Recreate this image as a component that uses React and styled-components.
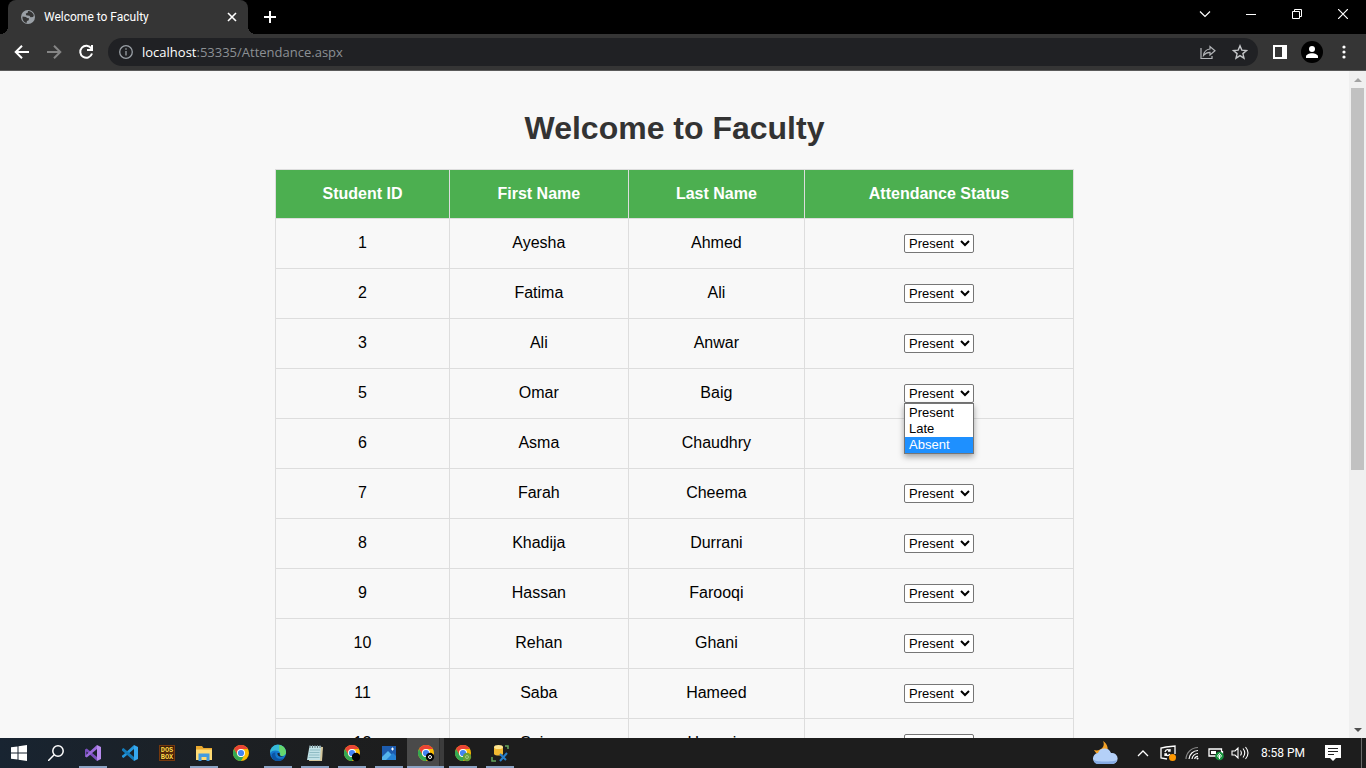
import React from "react";
import styled, { createGlobalStyle } from "styled-components";

const Global = createGlobalStyle`
  * { box-sizing: border-box; }
  body { margin: 0; background: #f8f8f8; font-family: "Liberation Sans", Arial, sans-serif; }
  svg { display: block; }
  button { border: 0; padding: 0; background: none; color: inherit; font: inherit; }
`;

const uiFont = `Roboto, "Open Sans", sans-serif`;

const Window = styled.div`
  display: flex;
  flex-direction: column;
  height: 100vh;
  overflow: hidden;
`;

const TabStrip = styled.header`
  display: flex;
  height: 34px;
  flex: none;
  padding-left: 8px;
  background: #000;
  color: #fff;
`;

const Tab = styled.div`
  display: flex;
  align-items: center;
  width: 240px;
  height: 34px;
  padding: 0 9px 0 12px;
  border-radius: 8px 8px 0 0;
  background: #353535;
  font: 12px/16px ${uiFont};
  position: relative;
  &::before, &::after {
    content: "";
    position: absolute;
    bottom: 0;
    width: 8px;
    height: 8px;
  }
  &::before { left: -8px; background: radial-gradient(circle at 0 0, #000 8px, #353535 8px); }
  &::after { right: -8px; background: radial-gradient(circle at 100% 0, #000 8px, #353535 8px); }
`;

const TabTitle = styled.span`
  flex: 1;
  padding-left: 8px;
  white-space: nowrap;
`;

const IconButton = styled.button`
  display: grid;
  place-items: center;
  flex: none;
  width: ${(p) => p.$w || 32}px;
  height: ${(p) => p.$h || 32}px;
  color: ${(p) => p.$color || "#fff"};
`;

const WindowControls = styled.div`
  display: flex;
  margin-left: auto;
`;

const Toolbar = styled.div`
  display: flex;
  align-items: center;
  flex: none;
  height: 37px;
  padding: 0 6px;
  background: #353535;
  border-bottom: 1px solid #5a5a5a;
`;

const AddressBar = styled.div`
  display: flex;
  align-items: center;
  flex: 1;
  height: 28px;
  margin: 0 6px;
  padding: 0 2px 0 10px;
  border-radius: 14px;
  background: #202124;
  color: #9aa0a6;
`;

const Url = styled.a`
  flex: 1;
  padding-left: 8px;
  color: #8c9094;
  font: 13px/20px "Open Sans", sans-serif;
  text-decoration: none;
  b { color: #fff; font-weight: 400; }
`;

const Viewport = styled.div`
  display: flex;
  flex: 1;
  min-height: 0;
`;

const Page = styled.main`
  flex: 1;
  overflow: hidden;
  padding: 16px 20px 0;
  background: #f8f8f8;
`;

const Heading = styled.h1`
  margin: 22px 0;
  color: #333;
  font-size: 32px;
  line-height: 38px;
  text-align: center;
`;

const Scrollbar = styled.div`
  display: flex;
  flex-direction: column;
  align-items: center;
  width: 17px;
  background: #f0f0f0;
`;

const ScrollArrow = styled.button`
  display: grid;
  place-items: center;
  width: 17px;
  height: 17px;
  color: ${(p) => p.$color};
`;

const Track = styled.div`
  flex: 1;
  width: 13px;
`;

const Thumb = styled.div`
  height: 60.4%;
  background: #c1c1c1;
`;

const Table = styled.table`
  width: 100%;
  max-width: 799px;
  margin: 0 auto;
  border-collapse: collapse;
  table-layout: fixed;
  color: #000;
  font-size: 16px;
  line-height: 18px;
  text-align: center;
`;

const Col = styled.col`
  width: ${(p) => p.$share}%;
`;

const Th = styled.th`
  height: 49px;
  padding: 0 15px;
  border: 1px solid #ddd;
  background: #4caf50;
  color: #fff;
`;

const Td = styled.td`
  height: 50px;
  padding: 0 15px 2px;
  border: 1px solid #ddd;
`;

const StatusCell = styled(Td)`
  padding: 0 15px;
`;

const Picker = styled.div`
  position: relative;
  width: 70px;
  margin: 0 auto;
`;

const Select = styled.select`
  display: block;
  width: 70px;
  height: 19px;
  padding: 0;
  border: 1px solid #767676;
  border-radius: 2px;
  background-color: #fff;
  color: #000;
  font: 13px "Liberation Sans", Arial, sans-serif;
`;

const Menu = styled.ul`
  position: absolute;
  z-index: 1;
  top: 100%;
  left: 0;
  width: 100%;
  margin: 0;
  padding: 1px 0 0;
  border: 1px solid #767676;
  background: #fff;
  box-shadow: 0 3px 6px rgba(0, 0, 0, 0.35);
  list-style: none;
`;

const MenuItem = styled.li`
  padding-left: 4px;
  background: ${(p) => (p.$active ? "#1e90ff" : "#fff")};
  color: ${(p) => (p.$active ? "#fff" : "#000")};
  font-size: 13px;
  line-height: 16px;
  text-align: left;
`;

const Taskbar = styled.footer`
  display: flex;
  flex: none;
  height: 30px;
  background: linear-gradient(90deg, #182431, #1c2024 16%, #1d1d1d 30%);
  color: #fff;
`;

const TaskButton = styled.button`
  display: grid;
  place-items: center;
  width: 37px;
  height: 30px;
  flex: none;
  background: ${(p) => (p.$active ? "linear-gradient(90deg, #4a4a4a 32px, #222 32px, #3c3c3c 33px)" : "none")};
  position: relative;
  &::after {
    content: "";
    position: absolute;
    bottom: 0;
    left: ${(p) => (p.$active ? 0 : 5)}px;
    right: ${(p) => (p.$active ? 0 : 4)}px;
    height: 2px;
    background: ${(p) => (p.$running ? "#8ba3c4" : "transparent")};
  }
`;

const Tray = styled.div`
  display: flex;
  align-items: center;
  margin-left: auto;
`;

const Clock = styled.time`
  width: 60px;
  font: 12px/16px ${uiFont};
  text-align: center;
  white-space: nowrap;
`;

const ShowDesktop = styled.button`
  width: 5px;
  height: 30px;
  margin-left: 8px;
  border-left: 1px solid #6a6a6a;
`;

const Line = ({ size = 16, d, w = 2, children }) => (
  <svg width={size} height={size} viewBox={`0 0 ${size} ${size}`} fill="none" stroke="currentColor" strokeWidth={w}>
    {d && <path d={d} />}
    {children}
  </svg>
);

const Globe = () => (
  <svg width="16" height="16" viewBox="0 0 16 16">
    <circle cx="8" cy="8" r="7" fill="#9aa0a6" />
    <path d="M2.500 7.500 6 8l1 1 2 .3-.3 2-1.700.8-.500 2C4.300 13.500 2 11 2.500 7.500ZM8 2l-.3 1.800-1.900.8.300 1.600 3.400.500 1 1.600 2.600-.300.700-1.500C13.500 4 10.500 2 8 2Z" fill="#353535" />
  </svg>
);

const Chrome = ({ badge, mark }) => (
  <svg width="18" height="18" viewBox="0 0 18 18">
    <circle cx="9" cy="9" r="8" fill="#fbbc04" />
    <path d="M2.070 5A8 8 0 0 1 15.930 5H9A4 4 0 0 0 5.500 11Z" fill="#ea4335" />
    <path d="M2.070 5A8 8 0 0 0 9 17l3.500-6A4 4 0 0 1 5.500 11Z" fill="#34a853" />
    <circle cx="9" cy="9" r="4" fill="#fff" />
    <circle cx="9" cy="9" r="3.100" fill="#4285f4" />
    {badge && <circle cx="13" cy="13" r="4.200" fill={badge} />}
    {mark && <circle cx="13" cy="13" r="1.500" fill="none" stroke={mark} />}
  </svg>
);

const Windows = () => (
  <svg width="16" height="16" viewBox="0 0 16 16" fill="#fff">
    <path d="M0 2.300 6.500 1.400V7.500H0ZM7.500 1.200 16 0V7.500H7.500ZM0 8.500H6.500V14.600L0 13.700ZM7.500 8.500H16V16L7.500 14.800Z" />
  </svg>
);

const VisualStudio = () => (
  <svg width="18" height="18" viewBox="0 0 18 18">
    <path d="M1 5.500 2.800 4.500 13 13V17L2.500 7.500v4L1 12.500Z" fill="#7b4fc0" />
    <path d="M1 12.500 2.800 13.500 13 5V1L2.500 10.500Z" fill="#9a6bdb" />
    <path d="M13 1 17 3v12l-4 2Z" fill="#b78bee" />
  </svg>
);

const Code = () => (
  <svg width="18" height="18" viewBox="0 0 18 18">
    <path d="M13 1 2 11l-1 .500v1.500l1.500 1L13 5Z" fill="#2396db" />
    <path d="M13 17 1 6.500V5l1.500-1L13 13Z" fill="#147bb9" />
    <path d="m13 1 4 2v12l-4 2Z" fill="#36a8ef" />
  </svg>
);

const DosBox = () => (
  <svg width="16" height="16" viewBox="0 0 16 16">
    <rect width="16" height="16" fill="#75380d" />
    <path d="M1 1h14v6.500H1ZM1 8.500h14V15H1Z" fill="#3a1c08" />
    <g fill="#ffd84a" fontFamily="Liberation Mono, monospace" fontSize="7" fontWeight="700" textAnchor="middle">
      <text x="8" y="7">DOS</text>
      <text x="8" y="14">BOX</text>
    </g>
  </svg>
);

const Explorer = () => (
  <svg width="18" height="18" viewBox="0 0 18 18">
    <path d="M1 2h6l1.500 2H17v12H1Z" fill="#e9a82e" />
    <path d="M1 5.500h16V16H1Z" fill="#ffdb74" />
    <path d="M3.500 9.500h11V17h-3v-4h-5v4h-3Z" fill="#439be0" />
  </svg>
);

const Edge = () => (
  <svg width="18" height="18" viewBox="0 0 18 18">
    <circle cx="9" cy="9" r="8" fill="#1479cf" />
    <path d="M1 9A8 8 0 0 1 17 8c.4 4-5 5-6 3.500C10 10 12 9 10 7.500 7.500 5.800 3 6 1 9Z" fill="#36b9d8" />
    <path d="M10 1.100A8 8 0 0 1 17 8c.2 3-3 4.500-5.500 3.800C11 10.500 12 9 10.300 7Z" fill="#66d76d" />
    <path d="M6.500 8.500C5 14 11 16.500 15.500 13.500 12 19 3.500 18 2.500 11.500 3 9 5 8 6.500 8.500Z" fill="#0c54a3" />
    <path d="M8.500 9c-.5 2.500 2 4.500 6.500 3.500-3 0-4.800-1-4.300-3.500Z" fill="#1c2227" />
  </svg>
);

const Notepad = () => (
  <svg width="18" height="18" viewBox="0 0 18 18">
    <path d="m4 2 13 1-1 14H3Z" fill="#d4c79c" />
    <path d="M3.500 2H15l-1 14H1Z" fill="#c1e2e7" />
    <path d="M4 6h10M3.500 8.500h10M3 11h10.500M2.500 13.500h11" stroke="#8fbcc4" />
    <path d="M4 1v3M6.500 1v3M9 1v3M11.500 1v3M14 1v3" stroke="#667a80" />
  </svg>
);

const Photos = () => (
  <svg width="16" height="16" viewBox="0 0 16 16">
    <path d="M1 1h14v14H1Z" fill="#1d5cae" />
    <path d="m1 12 6-6 8 8v1H1Z" fill="#54b5ed" />
    <path d="m8 12 4-4 3 3v4H5Z" fill="#2582d4" />
    <path d="M11.500 2.500v3M10 4h3" stroke="#fff" />
  </svg>
);

const Tools = () => (
  <svg width="18" height="18" viewBox="0 0 18 18" fill="none">
    <path d="M3 3v7c1 2 8 2 9 0V3Z" fill="#f2b932" />
    <ellipse cx="7.500" cy="3" rx="4.500" ry="2" fill="#ffe792" />
    <path d="M14 2h3v3M1 13v4h4" stroke="#66a65c" strokeWidth="1.500" />
    <path d="m9 10 6 6m1-7-7 8" stroke="#287fca" strokeWidth="2" />
  </svg>
);

const Weather = () => (
  <svg width="26" height="26" viewBox="0 0 26 26">
    <path d="M11 1c5 3 6 9 3 13-5 3-10 0-12-4 3 1 7 0 9-3 1-2 1-4 0-6Z" fill="#f3a126" />
    <path d="M7 24a5.500 5.500 0 0 1-1-11 7 7 0 0 1 13 0 5.600 5.600 0 1 1 0 11Z" fill="#b4d0f8" />
    <path d="M2 20c3 2 19 2 23 0-1 3-3 4-6 4H7c-3 0-5-1-5-4Z" fill="#86abe4" />
  </svg>
);

const students = [
  [1, "Ayesha", "Ahmed"],
  [2, "Fatima", "Ali"],
  [3, "Ali", "Anwar"],
  [5, "Omar", "Baig"],
  [6, "Asma", "Chaudhry"],
  [7, "Farah", "Cheema"],
  [8, "Khadija", "Durrani"],
  [9, "Hassan", "Farooqi"],
  [10, "Rehan", "Ghani"],
  [11, "Saba", "Hameed"],
  [12, "Saira", "Hussain"],
];

const statuses = ["Present", "Late", "Absent"];

const apps = [
  { name: "Start", icon: <Windows /> },
  { name: "Search", icon: <Line d="M0 16 6.200 9.800" w={1.500}><circle cx="10" cy="6" r="5.200" /></Line> },
  { name: "Visual Studio", icon: <VisualStudio />, running: true },
  { name: "Visual Studio Code", icon: <Code /> },
  { name: "DOSBox", icon: <DosBox /> },
  { name: "File Explorer", icon: <Explorer />, running: true },
  { name: "Chrome", icon: <Chrome /> },
  { name: "Edge", icon: <Edge />, running: true },
  { name: "Notepad", icon: <Notepad />, running: true },
  { name: "Chrome profile", icon: <Chrome badge="#050505" />, running: true },
  { name: "Photos", icon: <Photos />, running: true },
  { name: "Chrome window", icon: <Chrome badge="#050505" mark="#fff" />, running: true, active: true },
  { name: "Chrome guest", icon: <Chrome badge="#689f38" mark="#a5cc80" />, running: true },
  { name: "SQL tools", icon: <Tools />, running: true },
];

function StatusPicker({ name, open }) {
  return (
    <Picker>
      <Select aria-label={`Attendance status of ${name}`} defaultValue="Present">
        {statuses.map((s) => <option key={s}>{s}</option>)}
      </Select>
      {open && (
        <Menu role="listbox" aria-label="Attendance options">
          {statuses.map((s) => (
            <MenuItem key={s} role="option" aria-selected={s === "Absent"} $active={s === "Absent"}>{s}</MenuItem>
          ))}
        </Menu>
      )}
    </Picker>
  );
}

export default function App() {
  return (
    <>
      <Global />
      <Window>
        <TabStrip>
          <Tab>
            <Globe />
            <TabTitle>Welcome to Faculty</TabTitle>
            <IconButton aria-label="Close tab" $w={14}><Line size={10} d="m1 1 8 8m0-8-8 8" w={1.600} /></IconButton>
          </Tab>
          <IconButton aria-label="New tab" $w={44} $h={34}><Line size={12} d="M6 0v12M0 6h12" /></IconButton>
          <WindowControls>
            <IconButton aria-label="Search tabs" $w={46} $h={28}><Line size={12} d="m1 3.500 5 5 5-5" w={1.200} /></IconButton>
            <IconButton aria-label="Minimize" $w={46} $h={28}><Line size={10} d="M0 5.500h10" w={1} /></IconButton>
            <IconButton aria-label="Restore" $w={46} $h={28}><Line size={10} d="M.5 2.500h7v7h-7ZM2.500 2V.500h7v7H8" w={1} /></IconButton>
            <IconButton aria-label="Close" $w={46} $h={28}><Line size={10} d="m0 0 10 10m0-10L0 10" w={1.200} /></IconButton>
          </WindowControls>
        </TabStrip>

        <Toolbar>
          <IconButton aria-label="Back"><Line d="M15 8H2m6-6.300L1.700 8 8 14.300" /></IconButton>
          <IconButton aria-label="Forward" $color="#858585"><Line d="M1 8h13M8 1.700 14.300 8 8 14.300" /></IconButton>
          <IconButton aria-label="Reload"><Line d="M13.300 4.500A6 6 0 1 0 14 9.500M14 1v5H9" /></IconButton>
          <AddressBar>
            <Line w={1.300}><circle cx="8" cy="8" r="6.300" /><path d="M8 7v4.500M8 4.200v1.600" /></Line>
            <Url href="http://localhost:53335/Attendance.aspx"><b>localhost</b>:53335/Attendance.aspx</Url>
            <IconButton aria-label="Share" $color="#b4b6b9"><Line d="M1 4v10.500h11V12M10 2.500V5c-4 .500-6 2.500-6.500 6.500C5.500 9 7.500 8.300 10 8.300V11l5-4.300Z" w={1.200} /></IconButton>
            <IconButton aria-label="Bookmark" $color="#c4c6c8"><Line d="m8 1.800 1.800 4.300 4.700.400-3.600 3.100 1.100 4.600L8 11.700l-4 2.500 1.100-4.600L1.500 6.500l4.700-.400Z" w={1.400} /></IconButton>
          </AddressBar>
          <IconButton aria-label="Side panel"><Line size={14} d="M1 1h12v12H1Z"><path d="M9 1h4v12H9Z" fill="currentColor" stroke="none" /></Line></IconButton>
          <IconButton aria-label="Profile">
            <svg width="22" height="22" viewBox="0 0 22 22">
              <circle cx="11" cy="11" r="11" fill="#000" />
              <circle cx="11" cy="8" r="3" fill="#fff" />
              <path d="M5 17v-1.500c0-2 3-3.300 6-3.300s6 1.300 6 3.300V17Z" fill="#fff" />
            </svg>
          </IconButton>
          <IconButton aria-label="Menu">
            <svg width="4" height="14" viewBox="0 0 4 14" fill="#fff"><circle cx="2" cy="2" r="1.600" /><circle cx="2" cy="7" r="1.600" /><circle cx="2" cy="12" r="1.600" /></svg>
          </IconButton>
        </Toolbar>

        <Viewport>
          <Page>
            <Heading>Welcome to Faculty</Heading>
            <Table>
              <colgroup><Col $share={21.8} /><Col $share={22.4} /><Col $share={22.1} /><Col $share={33.7} /></colgroup>
              <thead>
                <tr><Th>Student ID</Th><Th>First Name</Th><Th>Last Name</Th><Th>Attendance Status</Th></tr>
              </thead>
              <tbody>
                {students.map(([id, first, last]) => (
                  <tr key={id}>
                    <Td>{id}</Td>
                    <Td>{first}</Td>
                    <Td>{last}</Td>
                    <StatusCell><StatusPicker name={`${first} ${last}`} open={id === 5} /></StatusCell>
                  </tr>
                ))}
              </tbody>
            </Table>
          </Page>
          <Scrollbar>
            <ScrollArrow aria-label="Scroll up" $color="#a3a3a3"><svg width="8" height="4" viewBox="0 0 8 4" fill="currentColor"><path d="M0 4 4 0l4 4Z" /></svg></ScrollArrow>
            <Track><Thumb /></Track>
            <ScrollArrow aria-label="Scroll down" $color="#505050"><svg width="8" height="4" viewBox="0 0 8 4" fill="currentColor"><path d="m0 0 4 4 4-4Z" /></svg></ScrollArrow>
          </Scrollbar>
        </Viewport>

        <Taskbar>
          {apps.map((a) => (
            <TaskButton key={a.name} aria-label={a.name} $running={a.running} $active={a.active}>{a.icon}</TaskButton>
          ))}
          <Tray>
            <IconButton aria-label="Weather" $w={48} $h={30}><Weather /></IconButton>
            <IconButton aria-label="Hidden icons" $w={28} $h={30}><Line size={12} d="m1 9 5-5 5 5" w={1.300} /></IconButton>
            <IconButton aria-label="Updates" $w={22} $h={30}>
              <Line d="M6 2 1 3v10l6 1M6 2l9-1v8" w={1.300}><path d="M5 7c1-3 4-3 5-1M10 4v2H8m2 3c-1 2-4 2-5 0m0 2V9h2" /><circle cx="12.500" cy="12.500" r="3.500" fill="#ff9800" stroke="none" /></Line>
            </IconButton>
            <IconButton aria-label="Network" $w={26} $h={30}>
              <Line size={14} w={1.200}><path d="M1 13A12 12 0 0 1 13 1.500" stroke="#888" /><path d="M4 13a9 9 0 0 1 9-8.500M7 13a6 6 0 0 1 6-5.500M9.700 13a3 3 0 0 1 3.300-2.700" /><circle cx="12.500" cy="12.500" r="1" fill="#fff" stroke="none" /></Line>
            </IconButton>
            <IconButton aria-label="Battery" $w={22} $h={30}>
              <Line d="M1 4h12.500v7H1ZM14.500 6v3" w={1.300}><path d="M3 6h5v3H3Z" fill="#fff" stroke="none" /><circle cx="11.500" cy="11" r="4.300" fill="#15933c" stroke="none" /><path d="M11.500 8.500 9.500 11l2 2 2-2ZM11.500 10v4" strokeWidth="1" /></Line>
            </IconButton>
            <IconButton aria-label="Volume" $w={26} $h={30}><Line size={18} d="M1 7h3l3-3v10l-3-3H1ZM9.500 6.500q1.800 2.500 0 5M12 4.500q3.500 4.500 0 9M14.500 3q5 6 0 12" w={1.100} /></IconButton>
            <Clock>8:58 PM</Clock>
            <IconButton aria-label="Notifications" $w={40} $h={30}>
              <svg width="16" height="16" viewBox="0 0 16 16"><path d="M0 0h16v13h-5l-3 3-3-3H0Z" fill="#fff" /><path d="M3 3.500h10M3 6.500h10M3 9.500h6" stroke="#222" /></svg>
            </IconButton>
            <ShowDesktop aria-label="Show desktop" />
          </Tray>
        </Taskbar>
      </Window>
    </>
  );
}
